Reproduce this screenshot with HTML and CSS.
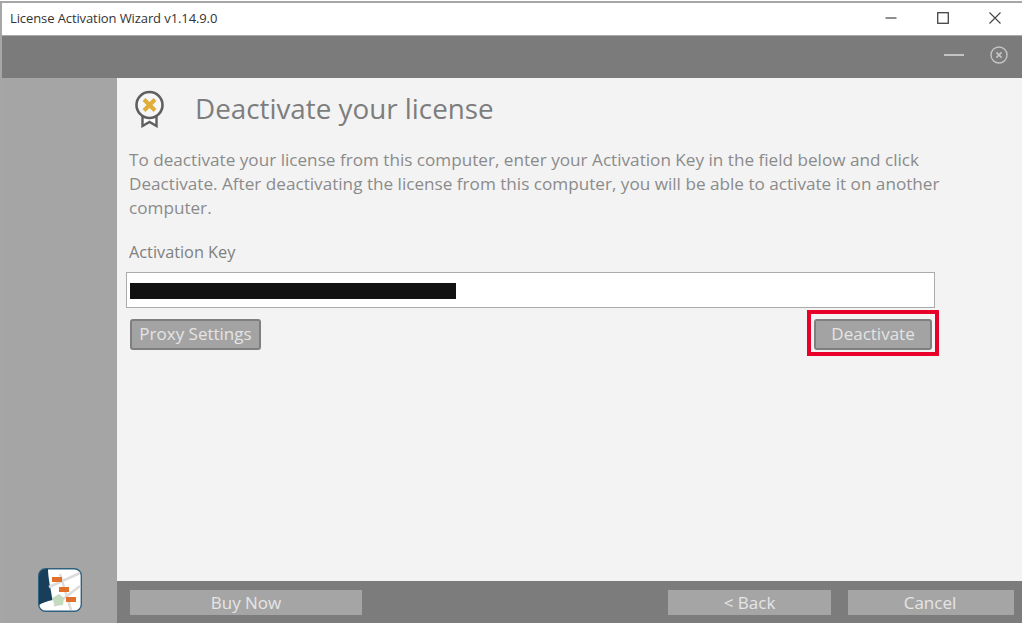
FILE: index.html
```html
<!DOCTYPE html>
<html lang="en">
<head>
<meta charset="utf-8">
<title>License Activation Wizard</title>
<link rel="stylesheet" href="styles.css">
</head>
<body>
<div class="window">
  <header class="titlebar">
    <span class="title-text">License Activation Wizard v1.14.9.0</span>
    <div class="win-controls">
      <svg class="win-icon" viewBox="0 0 12 12"><path d="M0.5 6H11.5" stroke="#444" stroke-width="1.2" fill="none"/></svg>
      <svg class="win-icon" viewBox="0 0 12 12"><rect x="0.7" y="0.7" width="10.6" height="10.6" stroke="#444" stroke-width="1.3" fill="none"/></svg>
      <svg class="win-icon" viewBox="0 0 12 12"><path d="M0.5 0.5L11.5 11.5M11.5 0.5L0.5 11.5" stroke="#444" stroke-width="1.1" fill="none"/></svg>
    </div>
  </header>
  <div class="topbar">
    <span class="dash"></span>
    <svg class="circle-x" viewBox="0 0 18 18"><circle cx="9" cy="9" r="8" stroke="#c4c4c4" stroke-width="1.4" fill="none"/><path d="M6.4 6.4L11.6 11.6M11.6 6.4L6.4 11.6" stroke="#c4c4c4" stroke-width="1.7" fill="none"/></svg>
  </div>
  <div class="middle">
    <aside class="sidebar">
      <svg class="app-logo" viewBox="0 0 44 44">
        <rect x="0.7" y="0.7" width="42.6" height="42.6" rx="7" fill="#fff" stroke="#2f617f" stroke-width="1.4"/>
        <path d="M8 1C4 1 1 4 1 8V37C4 35 9 33 14.500 32C13 22 10 10 10 1Z" fill="#173f5c"/>
        <path d="M11 19L42 5M16 38L42 18M22 6L33 42" stroke="#dcdcdc" stroke-width="2.500" fill="none"/>
        <path d="M14 30L21 26L26 30L25 37L17 38Z" fill="#c3dcc0"/>
        <rect x="14" y="9" width="10" height="5" fill="#e1702b"/>
        <rect x="21" y="19" width="10" height="5" fill="#e1702b"/>
        <rect x="28" y="29" width="10" height="5" fill="#e1702b"/>
      </svg>
    </aside>
    <div class="right-col">
      <main class="content">
        <div class="heading-row">
          <svg class="badge" viewBox="0 0 32 38">
            <path d="M9 24V36L16 32L23 36V24" fill="#fff" stroke="#5f5f5f" stroke-width="2.400"/>
            <circle cx="16" cy="15" r="13" fill="#f7f7f7" stroke="#5f5f5f" stroke-width="2.600"/>
            <path d="M10.500 9.500L21.500 20.500M21.500 9.500L10.500 20.500" stroke="#e0ad3a" stroke-width="4" fill="none"/>
          </svg>
          <h1 class="heading">Deactivate your license</h1>
        </div>
        <p class="intro">To deactivate your license from this computer, enter your Activation Key in the field below and click Deactivate. After deactivating the license from this computer, you will be able to activate it on another computer.</p>
        <label class="key-label">Activation Key</label>
        <div class="key-field"><span class="redaction"></span></div>
        <div class="action-row">
          <button class="btn btn-proxy">Proxy Settings</button>
          <span class="highlight"><button class="btn btn-deactivate">Deactivate</button></span>
        </div>
      </main>
      <footer class="footer">
        <span class="foot-btn foot-buy">Buy Now</span>
        <span class="foot-btn foot-back">&lt; Back</span>
        <span class="foot-btn foot-cancel">Cancel</span>
      </footer>
    </div>
  </div>
</div>
</body>
</html>
```
FILE: styles.css
```css
* { box-sizing: border-box; }
html, body { margin: 0; padding: 0; background: #fff; }
body { width: 1024px; height: 625px; overflow: hidden; font-family: "Open Sans", "Noto Sans", sans-serif; }
.window {
  margin: 1px 0 0 0;
  width: 1022px;
  height: 622px;
  border: solid #a6a6a6;
  border-width: 2px 0 0 2px;
  display: flex;
  flex-direction: column;
}
.titlebar {
  height: 32px;
  flex: none;
  background: #fff;
  display: flex;
  align-items: center;
  justify-content: space-between;
  padding: 0 0 2px 8px;
}
.title-text { font-size: 13px; color: #333; letter-spacing: -0.1px; }
.win-controls { display: flex; gap: 40px; padding-right: 21px; align-items: center; }
.win-icon { width: 12px; height: 12px; display: block; }
.topbar {
  height: 43px;
  flex: none;
  background: #7b7b7b;
  border-top: 1px solid #a8a8a8;
  display: flex;
  align-items: center;
  justify-content: flex-end;
  padding: 0 14px 4px 0;
  gap: 26px;
}
.dash { width: 20px; height: 2px; background: #c4c4c4; }
.circle-x { width: 18px; height: 18px; display: block; }
.middle { flex: 1; display: flex; min-height: 0; }
.sidebar {
  width: 115px;
  flex: none;
  background: #a5a5a5;
  display: flex;
  flex-direction: column;
  justify-content: flex-end;
  align-items: center;
  padding-bottom: 11px;
}
.app-logo { width: 44px; height: 44px; display: block; }
.right-col { flex: 1; display: flex; flex-direction: column; min-width: 0; }
.content { flex: 1; background: #f3f3f3; padding: 12px 0 0 12px; min-width: 0; }
.heading-row { display: flex; align-items: center; gap: 29px; height: 38px; padding-left: 4px; }
.badge { width: 33px; height: 38px; flex: none; }
.heading { margin: 0 0 2px 0; font-weight: 400; font-size: 27.8px; color: #7d7d7d; line-height: 38px; }
.intro { margin: 20px 0 0 0; width: 830px; font-size: 17.15px; line-height: 24px; color: #8b8b8b; }
.key-label { display: block; margin: 20px 0 0 0; font-size: 16.3px; line-height: 24px; color: #7f7f7f; }
.key-field {
  margin: 8px 0 0 -3px;
  width: 809px;
  height: 36px;
  background: #fff;
  border: 1px solid #ababab;
  display: flex;
  align-items: center;
  padding: 2px 0 0 3px;
}
.redaction { width: 326px; height: 16px; background: #111; }
.action-row { display: flex; justify-content: space-between; align-items: flex-start; width: 810px; margin: 2px 0 0 0; padding-left: 1px; }
.btn {
  font-family: inherit;
  font-size: 17px;
  color: #e4e4e4;
  background: #a3a3a3;
  border: 2px solid #7f7f7f;
  border-radius: 3px;
  padding: 0 0 2px 0;
  height: 31px;
}
.btn-proxy { width: 131px; margin-top: 9px; }
.btn-deactivate { width: 118px; display: block; }
.highlight { border: 4px solid #e8002a; padding: 5px 3px 2px 3px; background: #f3f3f3; }
.footer {
  height: 42px;
  flex: none;
  background: #7c7c7c;
  display: flex;
  align-items: center;
  padding-left: 13px;
  padding-right: 8px;
}
.foot-btn {
  height: 25px;
  background: #a5a5a5;
  color: #e6e6e6;
  font-size: 17px;
  line-height: 25px;
  text-align: center;
}
.foot-buy { width: 232px; }
.foot-back { width: 163px; margin-left: auto; }
.foot-cancel { width: 166px; margin-left: 17px; padding-right: 2px; }
```
